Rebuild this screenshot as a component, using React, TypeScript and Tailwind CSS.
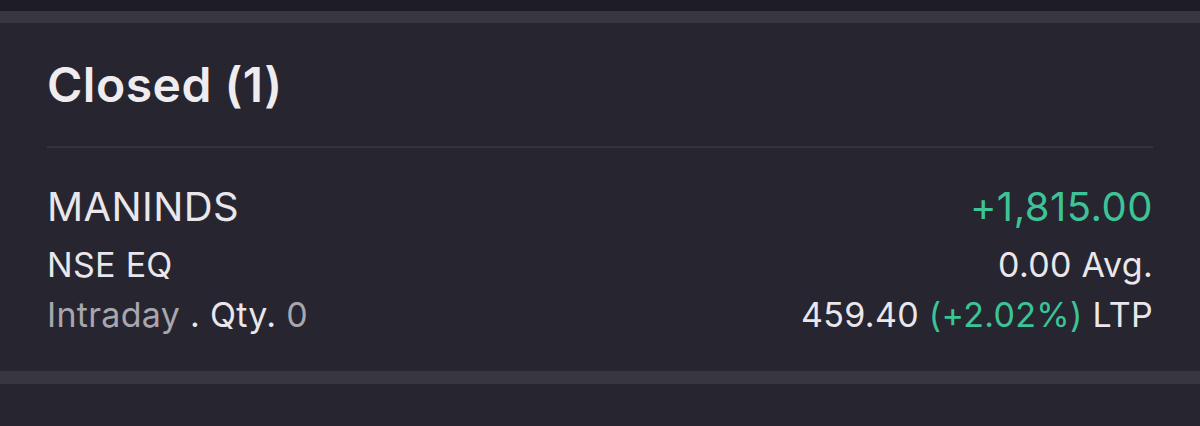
const App = () => {
  return (
    <div className="w-[1200px] h-[426px] overflow-hidden bg-[#27252f] font-['Inter',sans-serif]">
      <div className="h-[11px] bg-[#1e1c26]" />
      <div className="h-[12px] bg-[#38363f]" />

      {/* Closed positions */}
      <section className="px-[47px]">
        <h2 className="pt-[38px] text-[48px] leading-[48px] font-semibold tracking-[0.5px] text-[#eeecef]">
          Closed (1)
        </h2>
        <div className="mt-[37px] h-[2px] bg-[#35333d]" />

        <div className="flex justify-between pt-[33px] pb-[31px]">
          <div className="flex flex-col">
            <span className="text-[40px] leading-[52px] tracking-[0.4px] text-[#e9e7ec]">MANINDS</span>
            <span className="mt-[7px] text-[34px] leading-[50px] tracking-[0.3px] text-[#e9e7ec]">NSE EQ</span>
            <span className="text-[34px] leading-[50px] tracking-[0.3px] text-[#a8a6ae]">
              Intraday <span className="text-[#e9e7ec]">. Qty.</span> 0
            </span>
          </div>
          <div className="flex flex-col items-end">
            <span className="text-[40px] leading-[52px] tracking-[0.5px] text-[#3cc497]">+1,815.00</span>
            <span className="mt-[7px] text-[34px] leading-[50px] tracking-[0.3px] text-[#e9e7ec]">0.00 Avg.</span>
            <span className="text-[34px] leading-[50px] tracking-[0.3px] text-[#e9e7ec]">
              459.40 <span className="text-[#3cc497]">(+2.02%)</span> LTP
            </span>
          </div>
        </div>
      </section>

      <div className="h-[13px] bg-[#38363f]" />
    </div>
  );
};

export default App;
